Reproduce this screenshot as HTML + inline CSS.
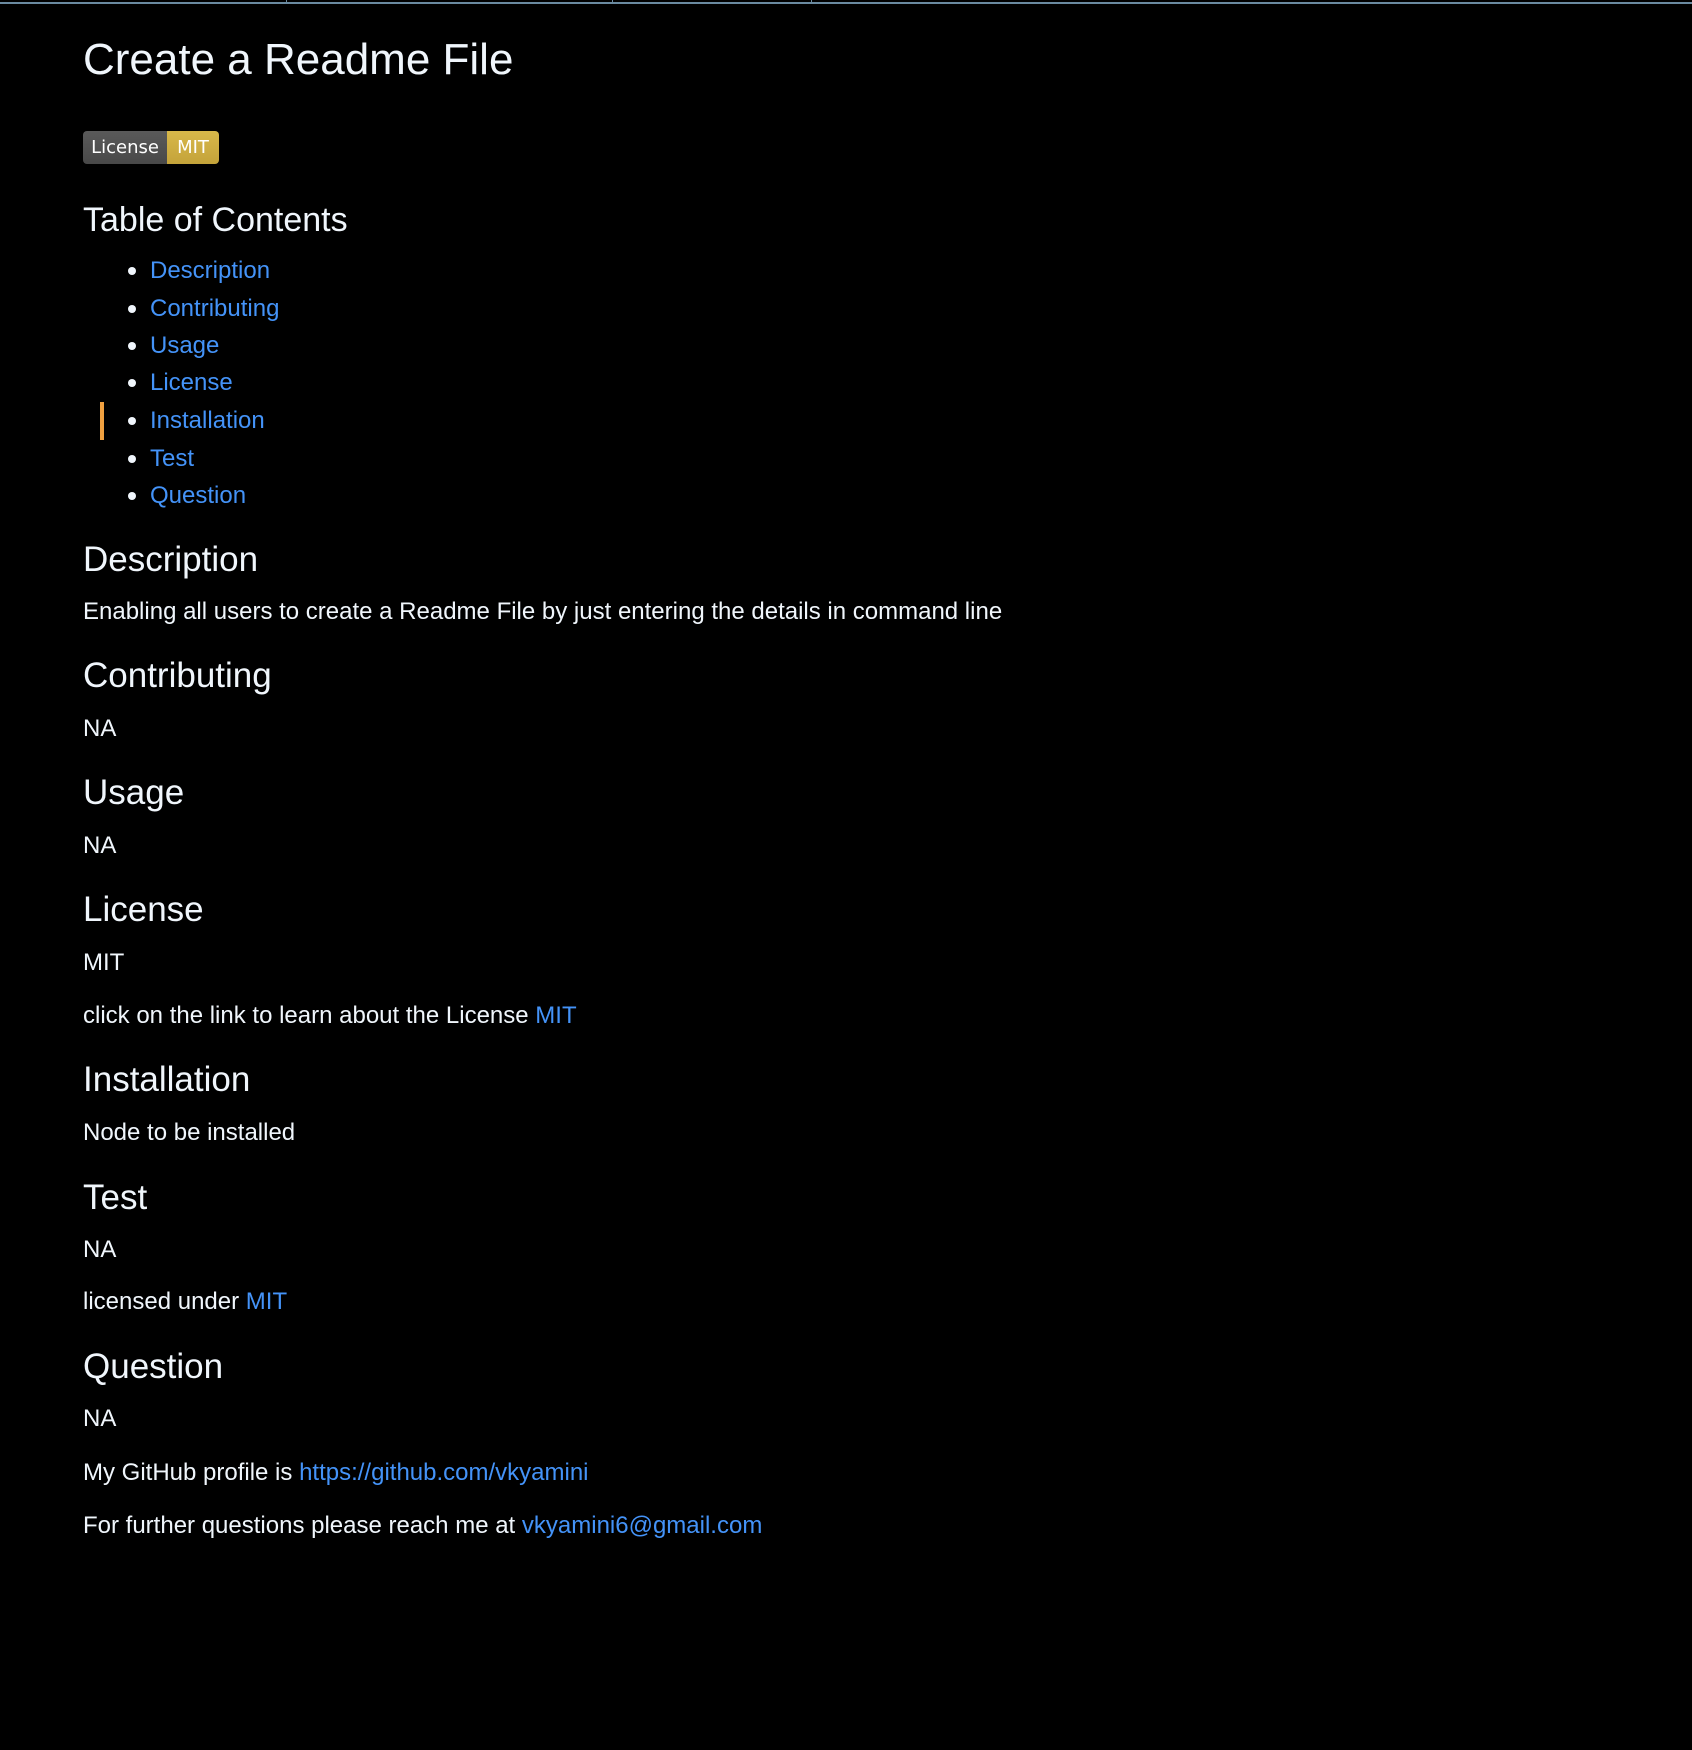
<!DOCTYPE html>
<html><head><meta charset="utf-8"><style>
html,body{margin:0;padding:0;background:#000;width:1692px;height:1750px;overflow:hidden}
body{position:relative;font-family:"Liberation Sans",sans-serif;color:#f0f6fc}
.t{position:absolute;left:83px;line-height:1;white-space:nowrap}
.h1{font-size:44px}
.h2{font-size:35px}
.p{font-size:24px}
a{color:#4493f8;text-decoration:none}
.li{position:absolute;left:150px;font-size:24px;line-height:1;white-space:nowrap}
.dot{position:absolute;left:128px;width:8px;height:8px;border-radius:50%;background:#f0f6fc}
</style></head><body>
<div style="position:absolute;left:0;top:2px;width:1692px;height:2px;background:#6a8aa0"></div>
<div style="position:absolute;left:286px;top:0;width:1px;height:4px;background:#6a8aa0"></div>
<div style="position:absolute;left:612px;top:0;width:1px;height:4px;background:#6a8aa0"></div>
<div style="position:absolute;left:811px;top:0;width:1px;height:4px;background:#6a8aa0"></div>

<div class="t h1" style="top:38px">Create a Readme File</div>

<div style="position:absolute;left:83px;top:131px;height:33px;width:136px;border-radius:4px;overflow:hidden;display:flex;font-family:'DejaVu Sans',sans-serif;font-size:18px;line-height:33px;color:#fff">
<div style="width:84px;background:linear-gradient(#5a5a5a,#484848);text-align:center">License</div>
<div style="width:52px;background:linear-gradient(#d8b84a,#c4a33a);text-align:center">MIT</div>
</div>

<div class="t h2" style="top:203px;font-size:34px">Table of Contents</div>

<div class="dot" style="top:267px"></div><div class="li" style="top:259px"><a>Description</a></div>
<div class="dot" style="top:305px"></div><div class="li" style="top:297px"><a>Contributing</a></div>
<div class="dot" style="top:342px"></div><div class="li" style="top:334px"><a>Usage</a></div>
<div class="dot" style="top:379px"></div><div class="li" style="top:371px"><a>License</a></div>
<div style="position:absolute;left:100px;top:402px;width:4px;height:38px;background:#f0a040"></div>
<div class="dot" style="top:417px"></div><div class="li" style="top:409px"><a>Installation</a></div>
<div class="dot" style="top:455px"></div><div class="li" style="top:447px"><a>Test</a></div>
<div class="dot" style="top:492px"></div><div class="li" style="top:484px"><a>Question</a></div>

<div class="t h2" style="top:542px">Description</div>
<div class="t p" style="top:600px">Enabling all users to create a Readme File by just entering the details in command line</div>
<div class="t h2" style="top:658px">Contributing</div>
<div class="t p" style="top:717px">NA</div>
<div class="t h2" style="top:775px">Usage</div>
<div class="t p" style="top:834px">NA</div>
<div class="t h2" style="top:892px">License</div>
<div class="t p" style="top:951px">MIT</div>
<div class="t p" style="top:1004px">click on the link to learn about the License <a>MIT</a></div>
<div class="t h2" style="top:1062px">Installation</div>
<div class="t p" style="top:1121px">Node to be installed</div>
<div class="t h2" style="top:1180px">Test</div>
<div class="t p" style="top:1238px">NA</div>
<div class="t p" style="top:1290px">licensed under <a>MIT</a></div>
<div class="t h2" style="top:1349px">Question</div>
<div class="t p" style="top:1407px">NA</div>
<div class="t p" style="top:1461px">My GitHub profile is <a>https://github.com/vkyamini</a></div>
<div class="t p" style="top:1514px">For further questions please reach me at <a>vkyamini6@gmail.com</a></div>
</body></html>
